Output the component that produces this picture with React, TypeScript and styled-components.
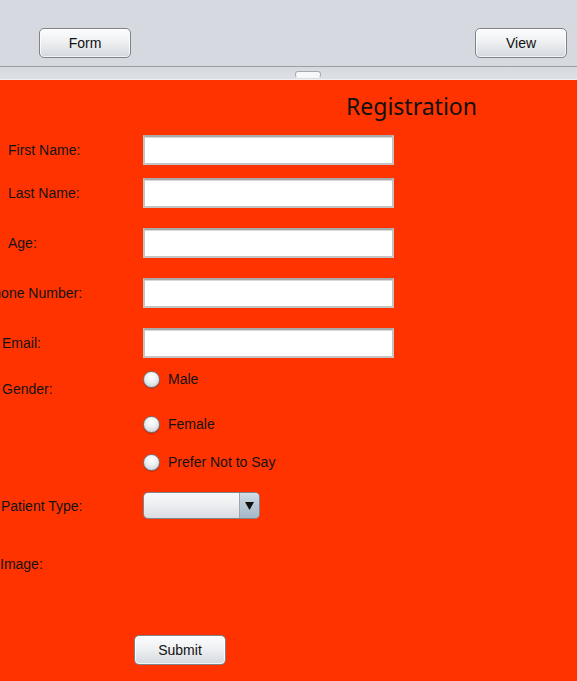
import styled, { createGlobalStyle } from "styled-components";

const GlobalStyle = createGlobalStyle`
  html, body {
    margin: 0;
    padding: 0;
    overflow: hidden;
  }
  body {
    font-family: "Liberation Sans", Arial, sans-serif;
  }
`;

const Window = styled.div`
  width: 577px;
  height: 681px;
  display: flex;
  flex-direction: column;
  background: #ff3300;
  overflow: hidden;
`;

const TopBar = styled.div`
  height: 67px;
  flex-shrink: 0;
  box-sizing: border-box;
  padding: 28px 10px 0 39px;
  display: flex;
  justify-content: space-between;
  align-items: flex-start;
  background: #d6d9df;
  border-bottom: 1px solid #9b9ea4;
`;

const NimbusButton = styled.button`
  width: 92px;
  height: 30px;
  box-sizing: border-box;
  border: 1px solid #7f838a;
  border-radius: 5px;
  background: linear-gradient(#fdfdfe 0%, #eef0f2 45%, #dcdfe4 85%, #d3d6dc 100%);
  box-shadow: inset 0 0 0 1px rgba(255, 255, 255, 0.7);
  font-family: "Liberation Sans", Arial, sans-serif;
  font-size: 14px;
  color: #111;
  padding: 0;
  cursor: pointer;
`;

const Divider = styled.div`
  height: 13px;
  flex-shrink: 0;
  display: flex;
  justify-content: center;
  align-items: flex-start;
  background: linear-gradient(#d6d9df, #dde0e5);
  border-bottom: 1px solid #eef0f3;
  box-sizing: border-box;
`;

const Grip = styled.div`
  width: 24px;
  height: 5px;
  margin-top: 4px;
  margin-left: 39px;
  border-radius: 3px;
  border: 1px solid #a7abb1;
  border-bottom-color: #f4f5f7;
  background: #f7f8fa;
`;

const Panel = styled.div`
  flex: 1;
  display: flex;
  flex-direction: column;
`;

const Title = styled.div`
  margin-top: 13px;
  padding-left: 346px;
  height: 27px;
  line-height: 27px;
  font-family: "Noto Sans", "Open Sans", sans-serif;
  font-size: 23px;
  color: #111;
`;

const Row = styled.div<{ $mt: number; $h: number }>`
  margin-top: ${(p) => p.$mt}px;
  height: ${(p) => p.$h}px;
  display: grid;
  grid-template-columns: 143px 1fr;
  align-items: center;
`;

const Label = styled.span<{ $x: number; $dy?: number }>`
  margin-left: ${(p) => p.$x}px;
  padding-top: ${(p) => p.$dy || 0}px;
  white-space: nowrap;
  font-size: 14px;
  line-height: 16px;
  color: #141414;
  align-self: ${(p) => (p.$dy ? "start" : "center")};
`;

const TextField = styled.input`
  width: 251px;
  height: 30px;
  box-sizing: border-box;
  border: 2px solid #c4c4c4;
  border-top-color: #a9a9a9;
  box-shadow: inset 0 1px 0 #d8d8d8;
  background: #fff;
  outline: none;
  padding: 0 4px;
  font-family: "Liberation Sans", Arial, sans-serif;
  font-size: 14px;
`;

const RadioGroup = styled.div`
  display: flex;
  flex-direction: column;
`;

const RadioItem = styled.label<{ $mt: number }>`
  margin-top: ${(p) => p.$mt}px;
  height: 18px;
  display: flex;
  align-items: center;
  gap: 8px;
  font-size: 14px;
  color: #141414;
`;

const RadioDot = styled.span`
  width: 17px;
  height: 17px;
  box-sizing: border-box;
  border-radius: 50%;
  border: 1px solid #70757c;
  background: radial-gradient(circle at 50% 30%, #ffffff 0%, #eceef1 45%, #c3c8cf 100%);
  box-shadow: 0 1px 0 rgba(120, 20, 0, 0.35);
`;

const Combo = styled.div`
  width: 117px;
  height: 27px;
  box-sizing: border-box;
  border: 1px solid #80858c;
  border-radius: 5px;
  display: flex;
  overflow: hidden;
  background: linear-gradient(#f8f9fa 0%, #eceef1 50%, #d9dce1 100%);
`;

const ComboValue = styled.div`
  flex: 1;
`;

const ComboArrow = styled.div`
  width: 19px;
  border-left: 1px solid #9aa6b2;
  display: flex;
  align-items: center;
  justify-content: center;
  background: linear-gradient(#d2dde7 0%, #b9c8d6 50%, #a6b7c7 100%);
`;

const Submit = styled(NimbusButton)`
  margin-left: 134px;
`;

const SubmitRow = styled.div`
  margin-top: 63px;
`;

export default function App() {
  return (
    <Window>
      <GlobalStyle />
      <TopBar>
        <NimbusButton>Form</NimbusButton>
        <NimbusButton>View</NimbusButton>
      </TopBar>
      <Divider>
        <Grip />
      </Divider>
      <Panel>
        <Title>Registration</Title>
        <Row $mt={15} $h={30}>
          <Label $x={8}>First Name:</Label>
          <TextField />
        </Row>
        <Row $mt={13} $h={30}>
          <Label $x={8}>Last Name:</Label>
          <TextField />
        </Row>
        <Row $mt={20} $h={30}>
          <Label $x={8}>Age:</Label>
          <TextField />
        </Row>
        <Row $mt={20} $h={30}>
          <Label $x={-16}>Phone Number:</Label>
          <TextField />
        </Row>
        <Row $mt={20} $h={30}>
          <Label $x={2}>Email:</Label>
          <TextField />
        </Row>
        <Row $mt={12} $h={101}>
          <Label $x={2} $dy={11}>
            Gender:
          </Label>
          <RadioGroup>
            <RadioItem $mt={0}>
              <RadioDot />
              Male
            </RadioItem>
            <RadioItem $mt={27}>
              <RadioDot />
              Female
            </RadioItem>
            <RadioItem $mt={20}>
              <RadioDot />
              Prefer Not to Say
            </RadioItem>
          </RadioGroup>
        </Row>
        <Row $mt={21} $h={27}>
          <Label $x={1}>Patient Type:</Label>
          <Combo>
            <ComboValue />
            <ComboArrow>
              <svg width="9" height="8" viewBox="0 0 9 8">
                <path d="M0 0 L9 0 L4.5 8 Z" fill="#111" />
              </svg>
            </ComboArrow>
          </Combo>
        </Row>
        <Row $mt={37} $h={16}>
          <Label $x={0}>Image:</Label>
          <span />
        </Row>
        <SubmitRow>
          <Submit>Submit</Submit>
        </SubmitRow>
      </Panel>
    </Window>
  );
}
